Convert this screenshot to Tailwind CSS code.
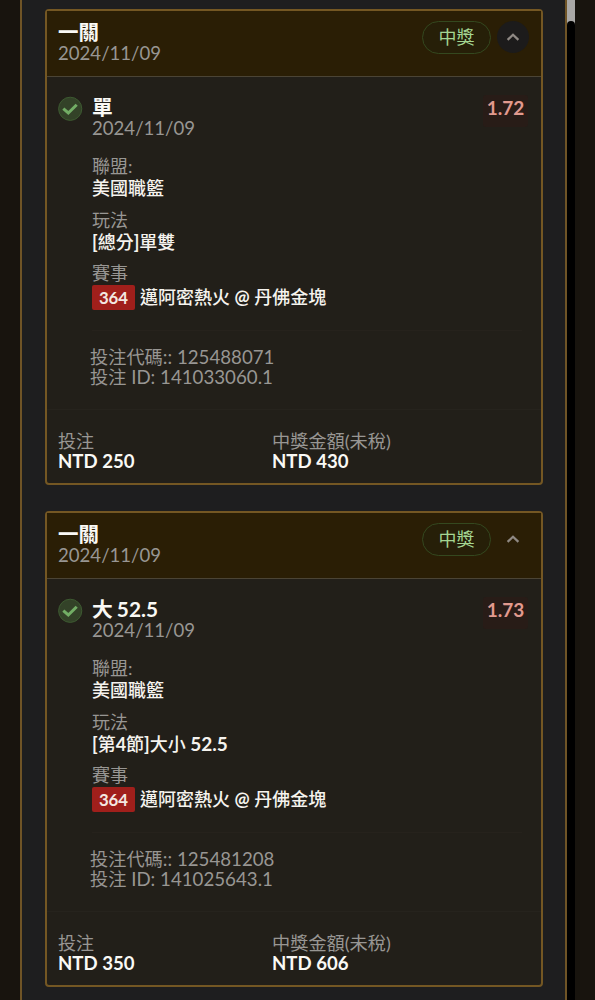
<!DOCTYPE html>
<html lang="zh-Hant">
<head>
<meta charset="utf-8">
<title>投注紀錄</title>
<script src="https://cdn.jsdelivr.net/npm/@tailwindcss/browser@4"></script>
</head>
<body class="h-[1000px] overflow-hidden bg-[#18140e] font-[Lato,'Noto_Sans_CJK_TC',sans-serif] text-[18px] text-[#989693]">
<div class="flex h-full">
  <div class="w-5 shrink-0"></div>
  <main id="list" class="flex h-full w-[547px] shrink-0 flex-col gap-[26px] border-x-2 border-[#6f5426] bg-[#1e1e1f] pl-[23px] pr-[22px] pt-[9px]"></main>
  <div class="h-full w-2 shrink-0 bg-[#a9a8a6]"><div class="mt-[21px] h-full rounded-t-full bg-black"></div></div>
</div>
<template id="card">
  <article class="h-[476px] w-[498px] shrink-0 rounded-[4px] border-2 border-[#745723] bg-[#221f19]">
    <header class="flex h-[66px] justify-between border-b border-[#4b4435] bg-[#2a1e05] pl-[11px] pr-[12px]">
      <div class="pt-[10px]">
        <h2 class="h-[22px] text-[20.5px] leading-[22px] font-bold text-[#faf9f5]"><span>一關</span></h2>
        <p class="h-[21px] text-[18.6px] leading-[21px]"><span>2024/11/09</span></p>
      </div>
      <div class="flex items-start gap-[6px] pt-[10px]">
        <span class="flex h-[33px] w-[69px] items-center justify-center rounded-full border border-[#34481f] bg-[#261f08] pb-px leading-none text-[#a4d692]"><span>中獎</span></span>
        <span data-k="btn" class="flex size-8 items-center justify-center rounded-full"><svg class="h-[8px] w-[14px]" viewBox="0 0 14 8" fill="none" stroke="#8f8984" stroke-width="2.2"><path d="M1.6 6.9 7 1.7l5.4 5.2"/></svg></span>
      </div>
    </header>
    <section class="h-[332px] pl-[11px] pr-[13px] pt-[18px]">
      <div class="flex">
        <svg class="mt-px size-[25px] shrink-0" viewBox="0 0 25 25"><circle cx="12.2" cy="12.8" r="11.6" fill="#334228" stroke="#3d5a31" stroke-width="1"/><path d="m5.3 12.6 5 4.4 8.4-8.2" fill="none" stroke="#72ad65" stroke-width="3"/></svg>
        <div class="ml-[9px] grow">
          <h3 data-k="pick" class="h-[23px] text-[20.8px] leading-[23px] font-bold [word-spacing:-1px] text-[#faf9f5]"></h3>
          <p class="h-5 text-[18.6px] leading-[21px]">2024/11/09</p>
        </div>
        <div class="flex h-8 w-[45px] items-center justify-center rounded-[3px] bg-[#281c17] pb-[6px] text-[19px] font-bold text-[#e29a8e]"><span data-k="odds"></span></div>
      </div>
      <dl class="ml-[34px] mt-[17px]">
        <dt class="h-[22px] leading-[22px]">聯盟:</dt>
        <dd class="h-[22px] leading-[22px] font-medium text-[#f5f3ee]">美國職籃</dd>
        <dt class="mt-[11px] h-[21px] leading-[21px]">玩法</dt>
        <dd data-k="play" class="h-[22px] leading-[22px] font-medium text-[#f5f3ee]"></dd>
        <dt class="mt-[10px] h-[21px] leading-[21px]">賽事</dt>
        <dd class="mt-px flex h-[25px] items-center text-[#f5f3ee]"><span class="mr-[5px] flex h-[25px] w-[43px] items-center justify-center rounded-[2px] bg-[#a01f1b] text-[16.8px] font-bold text-[#f3e8e2]">364</span><span class="font-medium">邁阿密熱火 <b class="text-[18px]">@</b> 丹佛金塊</span></dd>
      </dl>
      <div class="ml-[34px] mr-[6px] mt-[20px] h-px bg-[#26221c]"></div>
      <div class="ml-[32px] mt-[16px] text-[18.7px]">
        <p class="h-[20px] leading-[20px]"><span class="text-[18.2px]">投注代碼</span>:: <span data-k="code"></span></p>
        <p class="h-[20px] leading-[20px]"><span class="text-[18.2px]">投注</span> ID: <span data-k="bid"></span></p>
      </div>
    </section>
    <footer class="flex border-t border-[#26231d] pl-[11px] pt-[21px]">
      <div class="w-[214px]"><p class="h-5 leading-[21px]">投注</p><p class="h-5 text-[18.6px] leading-5 font-bold text-[#faf9f5]" data-k="stake"></p></div>
      <div><p class="h-5 text-[18.2px] leading-[21px]">中獎金額(未稅)</p><p class="h-5 text-[18.6px] leading-5 font-bold text-[#faf9f5]" data-k="win"></p></div>
    </footer>
  </article>
</template>
<script>
const bets = [
  {pick:'單', odds:'1.72', play:'<b>[</b>總分<b>]</b>單雙', code:'125488071', bid:'141033060.1', stake:'NTD 250', win:'NTD 430', active:true},
  {pick:'大 52.5', odds:'1.73', play:'<b>[</b>第<b>4</b>節<b>]</b>大小 <b class="text-[19px]">52.5</b>', code:'125481208', bid:'141025643.1', stake:'NTD 350', win:'NTD 606'}
];
for (const bet of bets) {
  const n = document.getElementById('card').content.cloneNode(true);
  for (const k of ['pick','odds','play','code','bid','stake','win']) n.querySelector('[data-k="'+k+'"]').innerHTML = bet[k];
  if (bet.active) n.querySelector('[data-k="btn"]').classList.add('bg-[#1c1b1b]');
  document.getElementById('list').append(n);
}
</script>
</body>
</html>
